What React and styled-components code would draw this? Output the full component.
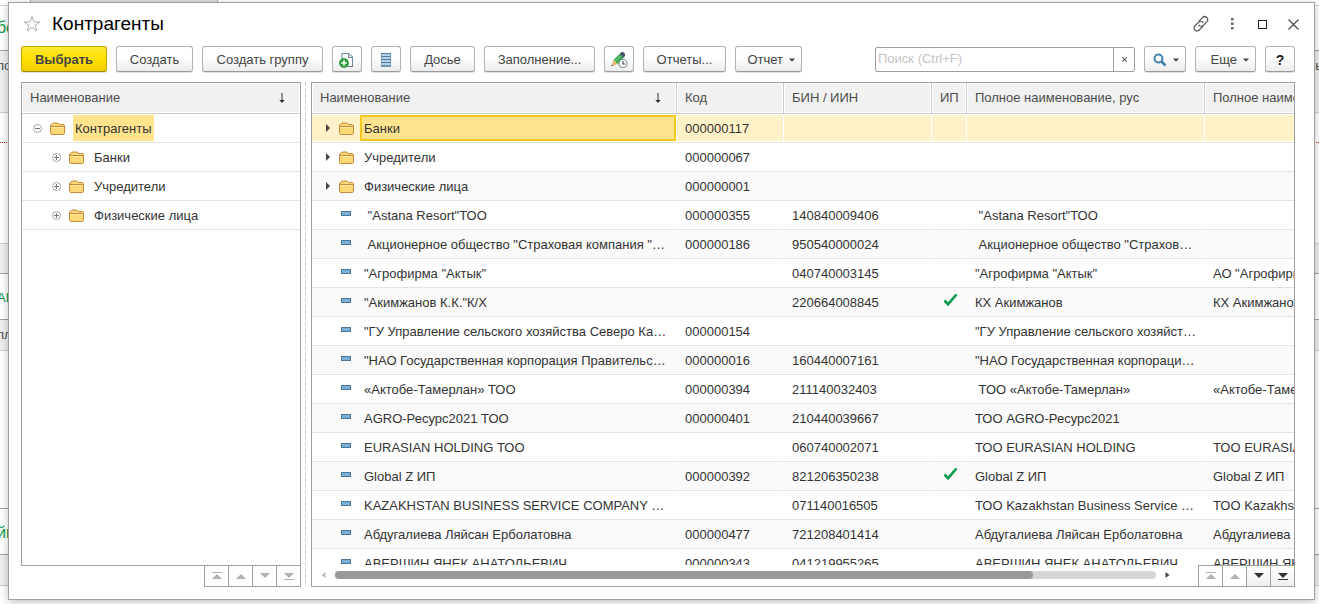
import React from "react";
import styled, { createGlobalStyle, css } from "styled-components";

const Global = createGlobalStyle`
  * { box-sizing: border-box; }
  html, body { margin: 0; height: 100%; }
  body { font: 13px/16px "Liberation Sans", Arial, sans-serif; color: #333; background: #fff; overflow: hidden; }
  button, input { font: inherit; color: inherit; margin: 0; }
  ul { list-style: none; margin: 0; padding: 0; }
  svg { display: block; flex: none; }
`;

const Page = styled.div`
  position: relative;
  display: flex;
  height: 100vh;
  padding: 2px 4px 4px 8px;
`;

const Backdrop = styled.div`
  position: absolute;
  inset: 0;
  overflow: hidden;
`;

const BackTab = styled.div`
  width: 188px;
  height: 5px;
  margin-left: 30px;
  border: 1px solid #a0a0a0;
  border-width: 0 1px;
  background: #dcdcdc;
`;

const Band = styled.div`
  display: flex;
  align-items: flex-start;
  justify-content: space-between;
  height: ${(p) => p.$h}px;
  padding-top: ${(p) => p.$top || 0}px;
  background: ${(p) => (p.$grey ? "#efefef" : "#fff")};
  border-bottom: 1px ${(p) => p.$line || "solid #a0a0a0"};
  color: ${(p) => p.$color || "#4d4d4d"};
  font-size: ${(p) => p.$size || 13}px;
  white-space: nowrap;
`;

const BackText = styled.span`
  margin: 0 -3px;
`;

const Dialog = styled.main`
  position: relative;
  flex: 1;
  min-width: 0;
  display: flex;
  flex-direction: column;
  padding: 0 19px 12px 12px;
  background: #fff;
  border: 1px solid #a0a0a0;
  box-shadow: 0 2px 8px rgba(0, 0, 0, 0.25);
`;

const TitleBar = styled.header`
  display: flex;
  align-items: center;
  height: 42px;
  margin-right: -9px;
  flex: none;
`;

const Title = styled.h1`
  flex: 1;
  margin: 0 0 0 10px;
  font-size: 19px;
  line-height: 24px;
  font-weight: 400;
  color: #000;
`;

const WindowActions = styled.div`
  display: flex;
  gap: 10px;
`;

const IconButton = styled.button`
  display: flex;
  align-items: center;
  justify-content: center;
  width: 21px;
  height: 24px;
  padding: 0;
  border: 0;
  background: none;
`;

const Toolbar = styled.div`
  display: flex;
  align-items: center;
  gap: 9px;
  height: 28px;
  flex: none;
`;

const Button = styled.button`
  display: flex;
  align-items: center;
  justify-content: center;
  gap: 6px;
  flex: none;
  width: ${(p) => p.$w}px;
  height: 26px;
  padding: 1px 0 0;
  border: 1px solid #b3b3b3;
  border-bottom-color: #9a9a9a;
  border-radius: 3px;
  background: linear-gradient(#fff 40%, #ececec);
  box-shadow: 0 1px 0 rgba(0, 0, 0, 0.12);
  color: #444;
  white-space: nowrap;
  ${(p) =>
    p.$primary &&
    css`
      border-color: #c0a200;
      border-bottom-color: #a08700;
      background: linear-gradient(#ffe934, #ffe000 50%, #f0cd00);
      font-weight: 700;
    `}
`;

const MenuButton = styled(Button)`
  justify-content: flex-end;
  padding-right: 6px;
`;

const HelpButton = styled(Button)`
  font-size: 14px;
  font-weight: 700;
  color: #222;
`;

const Search = styled.div`
  display: flex;
  width: 260px;
  height: 25px;
  margin-left: auto;
  border: 1px solid #a0a0a0;
  border-radius: 2px;
`;

const SearchInput = styled.input`
  flex: 1;
  min-width: 0;
  padding: 0 2px;
  border: 0;
  outline: 0;
  background: none;
  &::placeholder { color: #c4c4c4; opacity: 1; }
`;

const ClearButton = styled.button`
  display: flex;
  align-items: center;
  justify-content: center;
  width: 21px;
  padding: 0;
  border: 0;
  border-left: 1px solid #a0a0a0;
  background: none;
`;

const Panes = styled.div`
  flex: 1;
  min-height: 0;
  display: flex;
  margin-top: 9px;
`;

const TreePane = styled.section`
  width: 280px;
  flex: none;
  display: flex;
  flex-direction: column;
`;

const TreeBox = styled.div`
  flex: 1;
  min-height: 0;
  overflow: hidden;
  border: 1px solid #a0a0a0;
`;

const TreeHeader = styled.div`
  display: flex;
  align-items: center;
  justify-content: space-between;
  height: 31px;
  padding: 0 14px 0 8px;
  background: #f1f1f1;
  border-bottom: 1px solid #ccc;
  box-shadow: inset 0 0 0 1px #fff;
  color: #4d4d4d;
`;

const TreeItem = styled.li`
  display: flex;
  align-items: center;
  height: 29px;
  padding-left: ${(p) => (p.$level ? 30 : 11)}px;
  border-bottom: 1px solid #e3e3e3;
`;

const TreeLabel = styled.span`
  margin-left: 8px;
  padding: 6px 2px 4px;
  background: ${(p) => (p.$selected ? "#ffe48d" : "none")};
`;

const Toggle = styled.button`
  display: flex;
  padding: 0;
  margin-right: 8px;
  border: 0;
  background: none;
`;

const Splitter = styled.div`
  width: 10px;
  flex: none;
  padding-left: 4px;
  &::before {
    content: "";
    display: block;
    width: 1px;
    height: 100%;
    background: repeating-linear-gradient(#d4d4d4 0 4px, #fff 4px 6px);
  }
`;

const ListPane = styled.section`
  flex: 1;
  min-width: 0;
  display: flex;
  flex-direction: column;
  border: 1px solid #a0a0a0;
`;

const Viewport = styled.div`
  flex: 1;
  min-height: 0;
  overflow: hidden;
`;

const Table = styled.table`
  table-layout: fixed;
  width: 1131px;
  border-collapse: separate;
  border-spacing: 0;
`;

const Th = styled.th`
  height: 31px;
  padding: 0 8px;
  text-align: left;
  font-weight: 400;
  color: #4d4d4d;
  white-space: nowrap;
  background: #f1f1f1;
  border-right: 1px solid #ccc;
  border-bottom: 1px solid #ccc;
  box-shadow: inset 0 0 0 1px #fff;
`;

const HeadCell = styled.div`
  display: flex;
  align-items: center;
  justify-content: space-between;
  padding-right: 6px;
`;

const Row = styled.tr`
  background: ${(p) => (p.$selected ? "#fff2c8" : "#fff")};
  &:nth-child(odd) { background: ${(p) => (p.$selected ? "#fff2c8" : "#fafafa")}; }
`;

const Td = styled.td`
  height: 29px;
  padding: 2px 8px 0;
  white-space: pre;
  overflow: hidden;
  border-bottom: 1px solid #e3e3e3;
  border-right: 1px solid ${(p) => (p.$selected ? "#fff" : "transparent")};
  box-shadow: ${(p) => (p.$selected ? "inset 0 1px #fff, inset 0 -1px #fff" : "none")};
`;

const NameTd = styled(Td)`
  padding: 0;
`;

const CheckTd = styled(Td)`
  padding: 0 0 0 11px;
`;

const NameCell = styled.div`
  display: flex;
  align-items: center;
  height: 28px;
`;

const Marker = styled.span`
  display: flex;
  align-items: center;
  justify-content: flex-end;
  gap: 9px;
  width: 42px;
  margin-right: 6px;
  flex: none;
`;

const NameText = styled.span`
  flex: 1;
  height: 26px;
  padding: 4px 2px 2px;
  line-height: 16px;
  border: 2px solid ${(p) => (p.$selected ? "#f9c81e" : "transparent")};
  background: ${(p) => (p.$selected ? "#ffe48d" : "none")};
  overflow: hidden;
`;

const Footer = styled.div`
  display: flex;
  flex: none;
  height: 21px;
`;

const ScrollArea = styled.div`
  flex: 1;
  display: flex;
  align-items: center;
  gap: 9px;
  padding: 0 28px 2px 9px;
`;

const Track = styled.div`
  flex: 1;
  height: 8px;
  border-radius: 4px;
  background: #d5d5d5;
`;

const Thumb = styled.div`
  width: 85%;
  height: 8px;
  border-radius: 4px;
  background: #999;
`;

const Nav = styled.nav`
  display: flex;
  align-self: flex-end;
  border-left: 1px solid #a0a0a0;
  border-top: ${(p) => (p.$inner ? "1px solid #a0a0a0" : "0")};
`;

const NavButton = styled.button`
  display: flex;
  align-items: center;
  justify-content: center;
  width: 24px;
  height: ${(p) => (p.$inner ? 20 : 21)}px;
  padding: 0;
  border: 0;
  border-right: 1px solid #a0a0a0;
  border-bottom: ${(p) => (p.$inner ? "0" : "1px solid #a0a0a0")};
  background: ${(p) => (p.$on ? "linear-gradient(#fff, #efefef)" : "#fff")};
  color: ${(p) => (p.$on ? "#333" : "#b0b0b0")};
  ${(p) => p.$inner && css`
    &:last-child { width: 23px; border-right: 0; }
  `}
`;

const Star = () => (
  <svg width="18" height="18" viewBox="0 0 18 18" fill="none" stroke="#a9adb5" strokeWidth="1">
    <path d="M9 1.5 10.9 7H16.7L12 10.4 13.8 16 9 12.5 4.2 16 6 10.4 1.3 7H7.1Z" />
  </svg>
);
const Link = () => (
  <svg width="18" height="18" viewBox="0 0 18 18" fill="none" stroke="#555" strokeWidth="1.2">
    <path d="M7 6.2 10.5 2.7a2.9 2.9 0 0 1 4.5 4L11.2 10.5a2.6 2.6 0 0 1-3 .5M10.6 11.6 7.2 15a2.9 2.9 0 0 1-4.4-4L6.6 7.1a2.6 2.6 0 0 1 2.9-.5M11.3 6.5 9.9 7.9M7.9 9.9 6.4 11.4" />
  </svg>
);
const Dots = () => (
  <svg width="4" height="12" viewBox="0 0 4 12" fill="#666">
    <rect x="1" y="0" width="2.6" height="2.4" /><rect x="1" y="4.5" width="2.6" height="2.4" /><rect x="1" y="9" width="2.6" height="2.4" />
  </svg>
);
const Square = () => (
  <svg width="9" height="9"><rect x=".5" y=".5" width="8" height="8" fill="none" stroke="#222" /></svg>
);
const Cross = () => (
  <svg width="11" height="11" viewBox="0 0 11 11" stroke="#444" strokeWidth="1.1">
    <path d="M.5.5 10.5 10.5M10.5.5.5 10.5" />
  </svg>
);
const SmallCross = () => (
  <svg width="5" height="5" viewBox="0 0 5 5" stroke="#666" strokeWidth="1.1">
    <path d="M.3.3 4.7 4.7M4.7.3.3 4.7" />
  </svg>
);
const SortArrow = () => (
  <svg width="8" height="10" viewBox="0 0 8 10"><path d="M3.5 0h1v7h2.2L4 10 1.3 7h2.2Z" fill="#333" /></svg>
);
const Caret = () => (
  <svg width="6" height="5" viewBox="0 0 6 5"><path d="M0 1.5h6L3 4.8Z" fill="#444" /></svg>
);
const Folder = () => (
  <svg width="15" height="13" viewBox="0 0 15 13">
    <path d="M.5 11.5V3L2 2.5 3 1h5l1.5 1.5h4l1 .8v8.2l-.8 1H1.3Z" fill="#fbd976" stroke="#c68a3c" />
    <path d="M1 4.5h13" stroke="#c68a3c" />
    <path d="M1 5.5h13" stroke="#ffe9a0" />
  </svg>
);
const Expand = ({ open }) => (
  <svg width="9" height="9" viewBox="0 0 9 9" fill="none">
    <circle cx="4.5" cy="4.5" r="4" stroke="#a6a6a6" />
    <path d={open ? "M2 4.5h5" : "M2 4.5h5M4.5 2v5"} stroke="#777" />
  </svg>
);
const RowArrow = () => (
  <svg width="5" height="8" viewBox="0 0 5 8"><path d="M1 0 5 4 1 8Z" fill="#444" /></svg>
);
const Dash = () => (
  <svg width="13" height="8" viewBox="0 0 13 8">
    <rect x=".5" y=".5" width="9" height="4" fill="#7db0d6" stroke="#4d7695" />
  </svg>
);
const Check = () => (
  <svg width="15" height="18" viewBox="0 0 15 18">
    <path d="M1.5 7.5 5 11.2 13.5 1.5" fill="none" stroke="#0d9b4b" strokeWidth="2.6" />
  </svg>
);
const AddDoc = () => (
  <svg width="16" height="16" viewBox="0 0 16 16">
    <path d="M3 7V1.5h7L13.5 5v9.5H8" fill="#fff" stroke="#6f8ca3" strokeWidth="1.1" />
    <path d="M9.5 1.5V5.5h4" fill="#dfe9f0" stroke="#6f8ca3" strokeWidth="1.1" />
    <circle cx="5" cy="11" r="4.6" fill="#2da03a" stroke="#1d842b" strokeWidth=".6" />
    <path d="M5 8.2v5.6M2.2 11h5.6" stroke="#fff" strokeWidth="1.6" />
  </svg>
);
const ListIcon = () => (
  <svg width="12" height="16" viewBox="0 0 12 16">
    <rect x="1" y="1" width="10" height="14" fill="#82abc8" />
    <path d="M2 3h8M2 6h8M2 9h8M2 12h8" stroke="#c4dff0" strokeWidth="1.4" />
    <path d="M1 1.5h10M1 4.5h10M1 7.5h10M1 10.5h10M1 14h10" stroke="#547d9d" />
  </svg>
);
const Pencil = () => (
  <svg width="18" height="18" viewBox="0 0 18 18">
    <path d="M3.5 9 9.5 3l4 4-6 6Z" fill="#38a54c" />
    <path d="M5 10.5 11 4.5" stroke="#6bc67a" strokeWidth="1.4" />
    <path d="M9.5 3 11.5 1q2-.5 3 1t.4 3L13.5 7Z" fill="#44596b" />
    <path d="M3.5 9 7.5 13 1.5 15Z" fill="#ebb964" />
    <path d="M2 13.2 1.2 15.3 3.4 14.4Z" fill="#444" />
    <circle cx="13" cy="12.5" r="4" fill="#fff" stroke="#8296a8" strokeWidth="1.2" />
    <path d="M13 10v3h2.2" fill="none" stroke="#344" strokeWidth="1.1" />
  </svg>
);
const Magnifier = () => (
  <svg width="14" height="14" viewBox="0 0 14 14" fill="none" stroke="#3f81ae">
    <circle cx="5.5" cy="5.5" r="4" strokeWidth="2" />
    <path d="M8.5 8.5 12.5 12.5" strokeWidth="2.6" />
  </svg>
);
const NavIcon = ({ up, end }) => (
  <svg width="10" height="8" viewBox="0 0 10 8" fill="currentColor">
    {up ? <path d="M0 7 5 2 10 7Z" /> : <path d="M0 1 5 6 10 1Z" />}
    {end && <rect x="0" y={up ? 0 : 7} width="10" height="1" />}
  </svg>
);
const ScrollArrow = ({ left }) => (
  <svg width="5" height="6" viewBox="0 0 5 6"><path d={left ? "M4.5 0 .5 3l4 3Z" : "M.5 0 4.5 3l-4 3Z"} fill={left ? "#bbb" : "#444"} /></svg>
);

const bands = [
  { h: 1, line: "solid #d0d0d0" },
  { h: 45, left: "бе", color: "#0d9b4b", size: 16, top: 14 },
  { h: 62, grey: true, left: "по", right: "ь", line: "solid #ccc", top: 7 },
  { h: 30, line: "dotted #d02020" },
  { h: 101, line: "solid #ccc" },
  { h: 30, grey: true },
  { h: 46, left: "АВ", color: "#0d9b4b", top: 16 },
  { h: 31, grey: true, left: "пл", line: "solid #ccc", top: 7 },
  { h: 158 },
  { h: 46, left: "йн", color: "#0d9b4b", size: 16, top: 16 },
  { h: 31, grey: true, line: "solid #ccc" },
];

const tree = [
  { name: "Контрагенты", open: true, selected: true, level: 0 },
  { name: "Банки", level: 1 },
  { name: "Учредители", level: 1 },
  { name: "Физические лица", level: 1 },
];

const rows = [
  { group: true, selected: true, name: "Банки", code: "000000117" },
  { group: true, name: "Учредители", code: "000000067" },
  { group: true, name: "Физические лица", code: "000000001" },
  { name: ' "Astana Resort"ТОО', code: "000000355", bin: "140840009406", full: ' "Astana Resort"ТОО' },
  { name: ' Акционерное общество "Страховая компания "…', code: "000000186", bin: "950540000024", full: ' Акционерное общество "Страхов…' },
  { name: '"Агрофирма "Актык"', bin: "040740003145", full: '"Агрофирма "Актык"', kaz: 'АО "Агрофирма "Актык"' },
  { name: '"Акимжанов К.К."К/Х', bin: "220664008845", ip: true, full: "КХ Акимжанов", kaz: "КХ Акимжанов" },
  { name: '"ГУ Управление сельского хозяйства Северо Ка…', code: "000000154", full: '"ГУ Управление сельского хозяйст…' },
  { name: '"НАО Государственная корпорация Правительс…', code: "000000016", bin: "160440007161", full: '"НАО Государственная корпораци…' },
  { name: "«Актобе-Тамерлан» ТОО", code: "000000394", bin: "211140032403", full: " ТОО «Актобе-Тамерлан»", kaz: "«Актобе-Тамерлан» ТОО" },
  { name: "AGRO-Ресурс2021 ТОО", code: "000000401", bin: "210440039667", full: "ТОО AGRO-Ресурс2021" },
  { name: "EURASIAN HOLDING ТОО", bin: "060740002071", full: "ТОО EURASIAN HOLDING", kaz: "ТОО EURASIAN HOLDING" },
  { name: "Global Z ИП", code: "000000392", bin: "821206350238", ip: true, full: "Global Z ИП", kaz: "Global Z ИП" },
  { name: "KAZAKHSTAN BUSINESS SERVICE COMPANY …", bin: "071140016505", full: "ТОО Kazakhstan Business Service …", kaz: "ТОО Kazakhstan Business" },
  { name: "Абдугалиева Ляйсан Ерболатовна", code: "000000477", bin: "721208401414", full: "Абдугалиева Ляйсан Ерболатовна", kaz: "Абдугалиева Ляйсан" },
  { name: "АВЕРШИН ЯНЕК АНАТОЛЬЕВИЧ", code: "000000343", bin: "041219955265", full: "АВЕРШИН ЯНЕК АНАТОЛЬЕВИЧ", kaz: "АВЕРШИН ЯНЕК" },
];

const NavBar = ({ inner, canDown }) => (
  <Nav $inner={inner} aria-label="Прокрутка списка">
    <NavButton $inner={inner} aria-label="В начало"><NavIcon up end /></NavButton>
    <NavButton $inner={inner} aria-label="Вверх"><NavIcon up /></NavButton>
    <NavButton $inner={inner} $on={canDown} aria-label="Вниз"><NavIcon /></NavButton>
    <NavButton $inner={inner} $on={canDown} aria-label="В конец"><NavIcon end /></NavButton>
  </Nav>
);

export default function App() {
  return (
    <Page>
      <Global />
      <Backdrop aria-hidden="true">
        <BackTab />
        {bands.map((b, i) => (
          <Band key={i} $h={b.h} $top={b.top} $grey={b.grey} $line={b.line} $color={b.color} $size={b.size}>
            {b.left && <BackText>{b.left}</BackText>}
            {b.right && <BackText>{b.right}</BackText>}
          </Band>
        ))}
      </Backdrop>
      <Dialog>
        <TitleBar>
          <IconButton aria-label="В избранное"><Star /></IconButton>
          <Title>Контрагенты</Title>
          <WindowActions>
            <IconButton aria-label="Ссылка"><Link /></IconButton>
            <IconButton aria-label="Меню"><Dots /></IconButton>
            <IconButton aria-label="Развернуть"><Square /></IconButton>
            <IconButton aria-label="Закрыть"><Cross /></IconButton>
          </WindowActions>
        </TitleBar>
        <Toolbar>
          <Button $w={86} $primary>Выбрать</Button>
          <Button $w={77}>Создать</Button>
          <Button $w={121}>Создать группу</Button>
          <Button $w={30} aria-label="Создать копированием"><AddDoc /></Button>
          <Button $w={30} aria-label="Список"><ListIcon /></Button>
          <Button $w={65}>Досье</Button>
          <Button $w={111}>Заполнение...</Button>
          <Button $w={30} aria-label="История изменений"><Pencil /></Button>
          <Button $w={83}>Отчеты...</Button>
          <MenuButton $w={67}>Отчет <Caret /></MenuButton>
          <Search>
            <SearchInput aria-label="Поиск" placeholder="Поиск (Ctrl+F)" />
            <ClearButton aria-label="Очистить"><SmallCross /></ClearButton>
          </Search>
          <MenuButton $w={42} aria-label="Найти"><Magnifier /><Caret /></MenuButton>
          <MenuButton $w={61}>Еще <Caret /></MenuButton>
          <HelpButton $w={30}>?</HelpButton>
        </Toolbar>
        <Panes>
          <TreePane>
            <TreeBox>
              <TreeHeader>Наименование<SortArrow /></TreeHeader>
              <ul>
                {tree.map((t) => (
                  <TreeItem key={t.name} $level={t.level}>
                    <Toggle aria-label={t.open ? "Свернуть" : "Развернуть"}><Expand open={t.open} /></Toggle>
                    <Folder />
                    <TreeLabel $selected={t.selected}>{t.name}</TreeLabel>
                  </TreeItem>
                ))}
              </ul>
            </TreeBox>
            <NavBar />
          </TreePane>
          <Splitter />
          <ListPane>
            <Viewport>
              <Table>
                <colgroup>
                  <col width="365" /><col width="107" /><col width="148" /><col width="35" /><col width="238" /><col width="238" />
                </colgroup>
                <thead>
                  <tr>
                    <Th><HeadCell>Наименование<SortArrow /></HeadCell></Th>
                    <Th>Код</Th>
                    <Th>БИН / ИИН</Th>
                    <Th>ИП</Th>
                    <Th>Полное наименование, рус</Th>
                    <Th>Полное наименование, каз</Th>
                  </tr>
                </thead>
                <tbody>
                  {rows.map((r) => (
                    <Row key={r.name} $selected={r.selected}>
                      <NameTd $selected={r.selected}>
                        <NameCell>
                          <Marker>{r.group ? <><RowArrow /><Folder /></> : <Dash />}</Marker>
                          <NameText $selected={r.selected}>{r.name}</NameText>
                        </NameCell>
                      </NameTd>
                      <Td $selected={r.selected}>{r.code}</Td>
                      <Td $selected={r.selected}>{r.bin}</Td>
                      <CheckTd $selected={r.selected}>{r.ip && <Check />}</CheckTd>
                      <Td $selected={r.selected}>{r.full}</Td>
                      <Td $selected={r.selected}>{r.kaz}</Td>
                    </Row>
                  ))}
                </tbody>
              </Table>
            </Viewport>
            <Footer>
              <ScrollArea>
                <ScrollArrow left />
                <Track><Thumb /></Track>
                <ScrollArrow />
              </ScrollArea>
              <NavBar inner canDown />
            </Footer>
          </ListPane>
        </Panes>
      </Dialog>
    </Page>
  );
}
